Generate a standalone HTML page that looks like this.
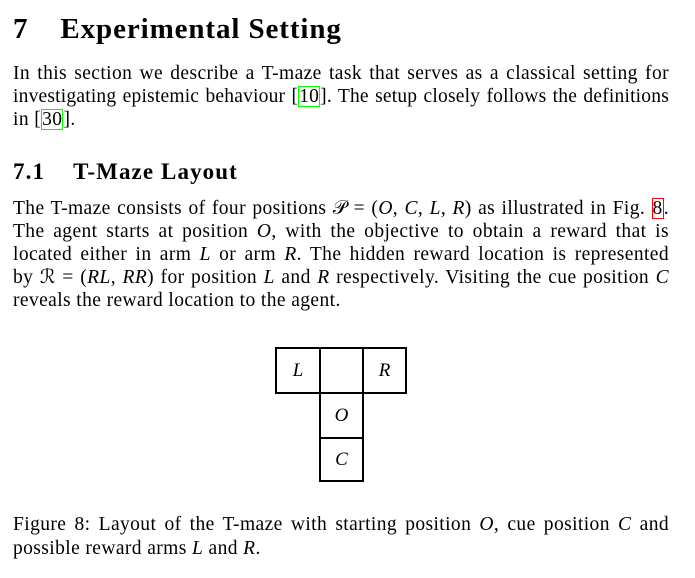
<!DOCTYPE html>
<html><head><meta charset="utf-8"><style>
body{margin:0;width:695px;height:578px;background:#fff;font-family:"Liberation Serif",serif;color:#000;position:relative;overflow:hidden}
.l{position:absolute;left:13px;width:656px;font-size:19.5px;letter-spacing:0.4px;line-height:22px;white-space:nowrap;text-align:justify;text-align-last:justify}
.n{text-align-last:left}
i{font-style:italic}
.g{outline:1.5px solid #0f0;outline-offset:-1px;padding:0 1px}
.r{outline:1.5px solid #f00;outline-offset:-1px;padding:0 1px}
h1{position:absolute;left:13px;top:13px;margin:0;font-size:29px;letter-spacing:0.9px;font-weight:bold;white-space:nowrap}
h2{position:absolute;left:13px;top:159px;margin:0;font-size:23px;letter-spacing:1.1px;font-weight:bold;white-space:nowrap}
.b{position:absolute;border:2px solid #000;box-sizing:border-box;font-size:19px;font-style:italic;display:flex;align-items:center;justify-content:center}
</style></head><body>
<h1>7<span style="display:inline-block;width:32px"></span>Experimental Setting</h1>
<div class="l" style="top:63px">In this section we describe a T-maze task that serves as a classical setting for</div>
<div class="l" style="top:86px;letter-spacing:0.2px;word-spacing:-1px">investigating epistemic behaviour [<span class="g">10</span>]. The setup closely follows the definitions</div>
<div class="l n" style="top:109px">in [<span class="g">30</span>].</div>
<h2>7.1<span style="display:inline-block;width:28px"></span>T-Maze Layout</h2>
<div class="l" style="top:198px">The T-maze consists of four positions 𝒫 = (<i>O</i>, <i>C</i>, <i>L</i>, <i>R</i>) as illustrated in Fig. <span class="r">8</span>.</div>
<div class="l" style="top:221px">The agent starts at position <i>O</i>, with the objective to obtain a reward that is</div>
<div class="l" style="top:244px">located either in arm <i>L</i> or arm <i>R</i>. The hidden reward location is represented</div>
<div class="l" style="top:267px">by ℛ = (<i>RL</i>, <i>RR</i>) for position <i>L</i> and <i>R</i> respectively. Visiting the cue position <i>C</i></div>
<div class="l n" style="top:290px">reveals the reward location to the agent.</div>
<div class="b" style="left:275px;top:347px;width:46px;height:47px">L</div>
<div class="b" style="left:319px;top:347px;width:45px;height:47px"></div>
<div class="b" style="left:362px;top:347px;width:45px;height:47px">R</div>
<div class="b" style="left:319px;top:392px;width:45px;height:47px">O</div>
<div class="b" style="left:319px;top:437px;width:45px;height:45px">C</div>
<div class="l" style="top:514px">Figure 8: Layout of the T-maze with starting position <i>O</i>, cue position <i>C</i> and</div>
<div class="l n" style="top:538px">possible reward arms <i>L</i> and <i>R</i>.</div>
</body></html>
